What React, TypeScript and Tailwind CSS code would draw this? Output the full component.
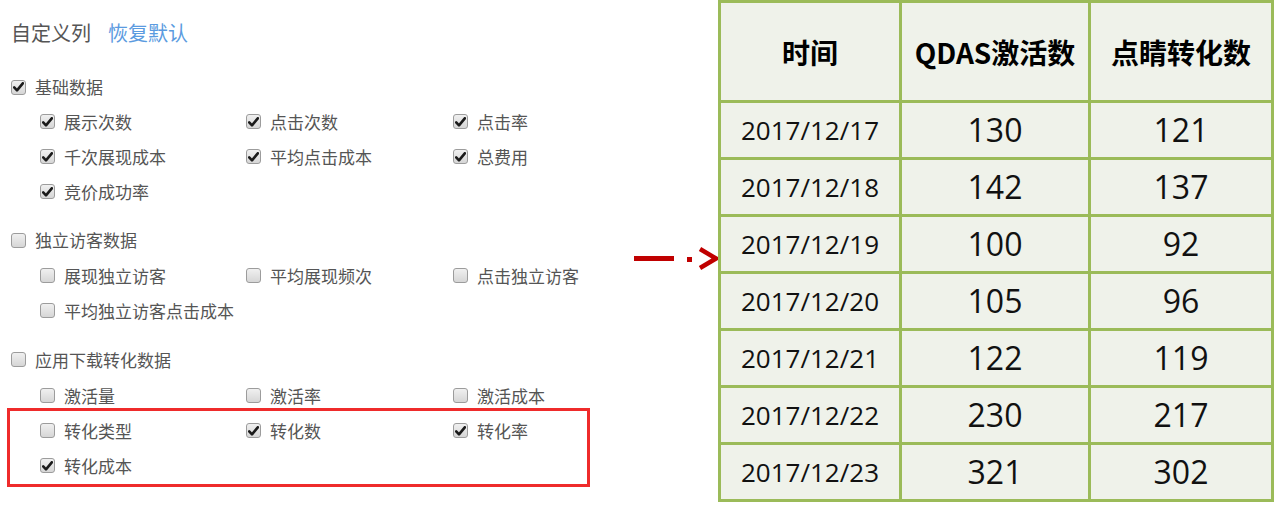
import React from "react";

const CJK = { fontFamily: '"Noto Sans CJK SC", "Noto Sans", sans-serif' };
const NUM = { fontFamily: '"Open Sans", "Noto Sans CJK SC", sans-serif' };

function Box({ checked }: { checked: boolean }) {
  return (
    <span className="w-[15px] h-[15px] shrink-0 rounded-[3px] border border-[#9c9c9c] bg-gradient-to-b from-[#f0f0f0] to-[#d6d6d6] flex items-center justify-center">
      {checked && (
        <svg width="11" height="10" viewBox="0 0 11 10">
          <path d="M1.2 5.4 L4 8.3 L9.8 1.3" fill="none" stroke="#1a1a1a" strokeWidth="2.6" strokeLinecap="round" strokeLinejoin="round" />
        </svg>
      )}
    </span>
  );
}

function Item({ label, checked }: { label: string; checked: boolean }) {
  return (
    <div className="h-[35px] flex items-center gap-[9px]">
      <Box checked={checked} />
      <span className="text-[17px] text-[#555]">{label}</span>
    </div>
  );
}

function Group({
  title,
  checked,
  items,
  headCls,
}: {
  title: string;
  checked: boolean;
  items: [string, boolean][];
  headCls: string;
}) {
  return (
    <div>
      <div className={"flex items-center gap-[9px] " + headCls}>
        <Box checked={checked} />
        <span className="text-[17px] text-[#555]">{title}</span>
      </div>
      <div className="pl-[29px] grid grid-cols-[206px_207px_auto]">
        {items.map(([l, c]) => (
          <Item key={l} label={l} checked={c} />
        ))}
      </div>
    </div>
  );
}

const rows: [string, string, string][] = [
  ["2017/12/17", "130", "121"],
  ["2017/12/18", "142", "137"],
  ["2017/12/19", "100", "92"],
  ["2017/12/20", "105", "96"],
  ["2017/12/21", "122", "119"],
  ["2017/12/22", "230", "217"],
  ["2017/12/23", "321", "302"],
];

export default function App() {
  return (
    <div className="w-[1274px] h-[516px] bg-white flex overflow-hidden" style={CJK}>
      <div className="relative w-[634px] pl-[11px] pt-[15px]">
        <div className="h-[35px] flex items-center gap-[17px] text-[20px]">
          <span className="text-[#555]">自定义列</span>
          <span className="text-[#5b9be0]">恢复默认</span>
        </div>
        <div className="mt-[20px] flex flex-col gap-[13px]">
          <Group
            title="基础数据"
            checked
            headCls="h-[34px]"
            items={[
              ["展示次数", true],
              ["点击次数", true],
              ["点击率", true],
              ["千次展现成本", true],
              ["平均点击成本", true],
              ["总费用", true],
              ["竞价成功率", true],
            ]}
          />
          <Group
            title="独立访客数据"
            checked={false}
            headCls="h-[36px]"
            items={[
              ["展现独立访客", false],
              ["平均展现频次", false],
              ["点击独立访客", false],
              ["平均独立访客点击成本", false],
            ]}
          />
          <Group
            title="应用下载转化数据"
            checked={false}
            headCls="h-[37px]"
            items={[
              ["激活量", false],
              ["激活率", false],
              ["激活成本", false],
              ["转化类型", false],
              ["转化数", true],
              ["转化率", true],
              ["转化成本", true],
            ]}
          />
        </div>
        <div className="absolute left-[7px] top-[408px] w-[583px] h-[79px] border-[3px] border-[#ef2b2b]" />
      </div>
      <div className="w-[84px] flex items-center">
        <svg width="84" height="30" viewBox="0 0 84 30" className="mt-[1px]">
          <rect x="0" y="12" width="40" height="5" fill="#c00000" />
          <rect x="53" y="13" width="5" height="5" fill="#c00000" />
          <path d="M66 5 L82 14.5 L66 24" fill="none" stroke="#c00000" strokeWidth="4.5" strokeLinejoin="miter" />
        </svg>
      </div>
      <div className="w-[556px] h-[502px] border-l-[3px] border-t-[3px] border-[#9bbb59] grid grid-cols-[181px_189px_183px] grid-rows-[100px_repeat(7,57px)] bg-[#eff2ea]">
        {["时间", "QDAS激活数", "点睛转化数"].map((h) => (
          <div key={h} className="border-r-[3px] border-b-[3px] border-[#9bbb59] flex items-center justify-center text-[28px] font-bold text-black">
            {h}
          </div>
        ))}
        {rows.map(([d, a, b]) => (
          <React.Fragment key={d}>
            <div className="border-r-[3px] border-b-[3px] border-[#9bbb59] flex items-center justify-center text-[26px] text-[#111]" style={NUM}>
              {d}
            </div>
            <div className="border-r-[3px] border-b-[3px] border-[#9bbb59] flex items-center justify-center text-[32px] text-[#111]" style={NUM}>
              {a}
            </div>
            <div className="border-r-[3px] border-b-[3px] border-[#9bbb59] flex items-center justify-center text-[32px] text-[#111]" style={NUM}>
              {b}
            </div>
          </React.Fragment>
        ))}
      </div>
    </div>
  );
}
